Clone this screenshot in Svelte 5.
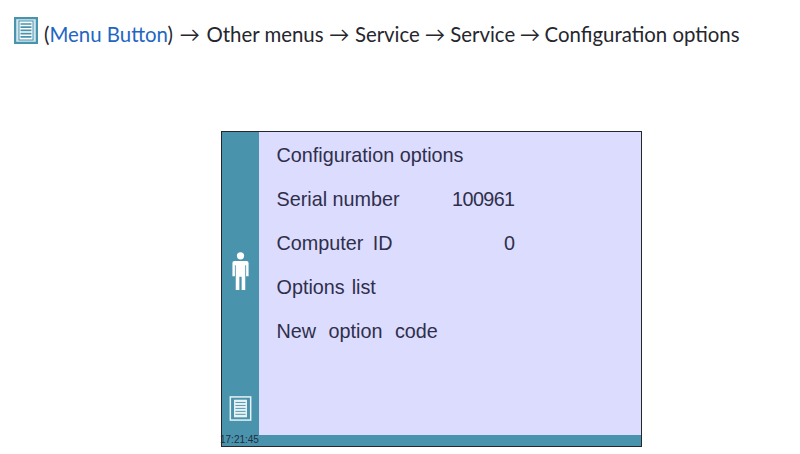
<script>
  const rows = [
    { label: 'Configuration options', value: '', spacing: 'none' },
    { label: 'Serial number', value: '100961', spacing: 'none' },
    { label: 'Computer ID', value: '0', spacing: 'mid' },
    { label: 'Options list', value: '', spacing: 'low' },
    { label: 'New option code', value: '', spacing: 'high' }
  ];
</script>

{#snippet menuIcon(cls)}
  <svg class={cls} viewBox="0 0 24 27" aria-hidden="true">
    <rect class="frame" x="1" y="1" width="22" height="25" />
    <rect class="sheet" x="5" y="4" width="14" height="19" />
    <path class="lines" d="M6.5 7h11M6.5 10.2h11M6.5 13.4h11M6.5 16.6h11M6.5 19.8h11" />
  </svg>
{/snippet}

<div class="page">
  <p class="path">
    {@render menuIcon('head-icon')}
    <span class="text">(<span class="link">Menu Button</span>)<span class="arrow first">→</span>Other menus<span class="arrow second">→</span>Service<span class="arrow">→</span>Service<span class="arrow last">→</span>Configuration options</span>
  </p>

  <div class="screen">
    <aside class="side">
      <svg class="person" viewBox="0 0 20 40" aria-hidden="true">
        <circle cx="10" cy="4" r="3.8" />
        <path d="M3.5 9.5h13a2 2 0 0 1 2 2v14h-2.6V14h-.9v26h-3.8V26h-2.4v14H5V14h-.9v11.500H1.500V11.500a2 2 0 0 1 2-2z" />
      </svg>
      {@render menuIcon('side-icon')}
    </aside>
    <main class="content">
      {#each rows as row}
        <div class="row {row.spacing}">
          <span>{row.label}</span>
          {#if row.value}<span class="value">{row.value}</span>{/if}
        </div>
      {/each}
    </main>
    <footer class="status"><span class="time">17:21:45</span></footer>
  </div>
</div>

<style>
  :global(body) {
    margin: 0;
    background: #fff;
  }
  .page {
    height: 454px;
    overflow: hidden;
    padding: 18px 0 0 14px;
    box-sizing: border-box;
  }
  .path {
    display: flex;
    align-items: flex-start;
    gap: 6px;
    margin: 0;
    height: 28px;
    font: 20.4px/28px Lato, "Open Sans", sans-serif;
    color: #26262e;
    white-space: nowrap;
  }
  .text {
    padding-top: 2px;
  }
  .arrow {
    margin: 0 5px;
  }
  .first {
    margin: 0 6.500px;
  }
  .second {
    margin: 0 5.500px;
  }
  .last {
    margin: 0 4.500px;
  }
  .link {
    color: #1f66c4;
  }
  .head-icon {
    width: 24px;
    height: 27px;
    margin-top: -1px;
  }
  .head-icon .frame {
    fill: #cfe6ee;
    stroke: #4a93ad;
    stroke-width: 2.4;
  }
  .head-icon .sheet {
    fill: #fff;
    stroke: #4a93ad;
    stroke-width: 1;
  }
  .head-icon .lines {
    fill: none;
    stroke: #4a93ad;
    stroke-width: 1.7;
  }
  .screen {
    margin: 85px 0 0 207px;
    width: 421px;
    height: 316px;
    box-sizing: border-box;
    border: 1px solid #26262e;
    display: grid;
    grid-template-columns: 37px 1fr;
    grid-template-rows: 1fr 11px;
    background: #dcdcff;
    position: relative;
  }
  .side {
    background: #4a93ad;
    display: flex;
    flex-direction: column;
    align-items: center;
    padding-top: 120px;
  }
  .person {
    width: 19px;
    height: 38px;
    fill: #fff;
  }
  .side-icon {
    width: 23px;
    height: 25px;
    margin-top: 106px;
  }
  .side-icon .frame {
    fill: #4a93ad;
    stroke: #e8f2f5;
    stroke-width: 1.6;
  }
  .side-icon .sheet {
    fill: #e8f2f5;
  }
  .side-icon .lines {
    fill: none;
    stroke: #4a93ad;
    stroke-width: 1;
  }
  .content {
    padding: 1px 0 0 17.500px;
    font: 19.8px/44px "Liberation Sans", Arial, sans-serif;
    color: #2f2f4a;
  }
  .row {
    width: 238px;
    height: 44px;
    display: flex;
    justify-content: space-between;
    white-space: nowrap;
  }
  .value {
    letter-spacing: -0.6px;
  }
  .mid {
    word-spacing: 4px;
  }
  .low {
    word-spacing: 1.5px;
  }
  .high {
    word-spacing: 7px;
  }
  .status {
    grid-column: 1 / -1;
    background: #4a93ad;
    position: relative;
  }
  .time {
    position: absolute;
    left: -2px;
    top: -1px;
    font: 10px/11px "Liberation Sans", Arial, sans-serif;
    color: #1f2d3d;
  }
</style>
